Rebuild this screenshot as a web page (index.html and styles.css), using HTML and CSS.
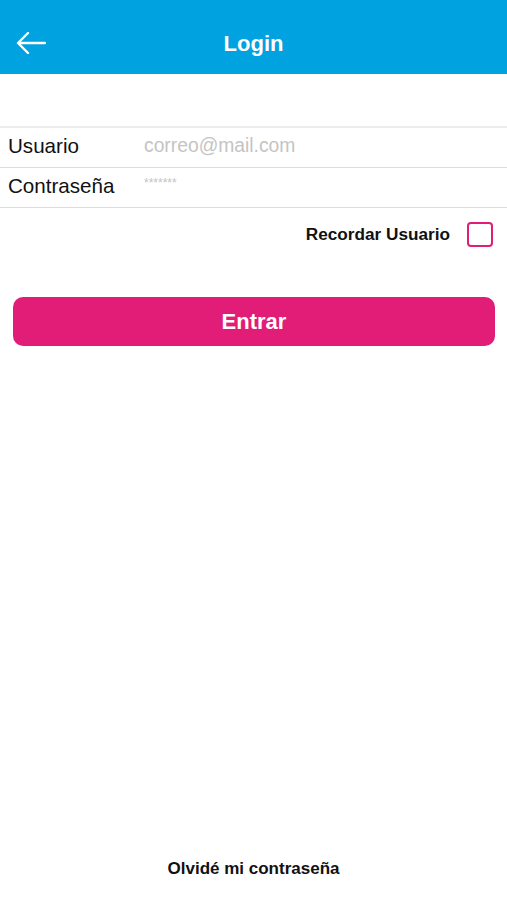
FILE: index.html
```html
<!DOCTYPE html>
<html lang="es">
<head>
    <meta charset="UTF-8">
    <meta name="viewport" content="width=device-width, initial-scale=1.0">
    <title>Login</title>
    <link rel="stylesheet" href="styles.css">
</head>
<body>
    <div class="screen">
        <header class="topbar">
            <span class="back">
                <svg width="30" height="22" viewBox="0 0 30 22">
                    <path d="M29 11H2M12 1L2 11l10 10" fill="none" stroke="#fff" stroke-width="2.4" stroke-linecap="round" stroke-linejoin="round"/>
                </svg>
            </span>
            <h1 class="title">Login</h1>
        </header>

        <form class="login-form">
            <div class="fields">
                <div class="field">
                    <label for="usuario">Usuario</label>
                    <input type="text" id="usuario" placeholder="correo@mail.com">
                </div>
                <div class="field">
                    <label for="clave">Contraseña</label>
                    <input type="text" id="clave" class="pass" placeholder="*******">
                </div>
            </div>

            <div class="remember">
                <span>Recordar Usuario</span>
                <span class="check"></span>
            </div>

            <button type="button" class="btn-entrar">Entrar</button>
        </form>

        <a class="forgot">Olvidé mi contraseña</a>
    </div>
</body>
</html>
```

FILE: styles.css
```css
* {
    box-sizing: border-box;
}
body {
    margin: 0;
    font-family: "Liberation Sans", Arial, sans-serif;
    background-color: #fff;
    color: #111;
}
.screen {
    height: 900px;
    display: flex;
    flex-direction: column;
}
.topbar {
    height: 74px;
    background-color: #00a2e0;
    display: flex;
    align-items: center;
    justify-content: center;
    position: relative;
    padding-top: 14px;
}
.back {
    position: absolute;
    left: 16px;
    top: 32px;
    display: flex;
}
.title {
    margin: 0;
    color: #fff;
    font-size: 22px;
    font-weight: bold;
}
.login-form {
    padding-top: 52px;
}
.fields {
    border-top: 2px solid #ececec;
}
.field {
    height: 40px;
    display: flex;
    align-items: center;
    border-bottom: 1px solid #dcdcdc;
    padding-left: 8px;
    padding-bottom: 3px;
}
.field label {
    width: 136px;
    font-size: 20.6px;
    color: #111;
}
.field input {
    flex: 1;
    border: none;
    outline: none;
    font-family: inherit;
    font-size: 19.3px;
    padding: 0;
    color: #111;
}
.field input::placeholder {
    color: #c4c4c4;
}
.field .pass {
    font-size: 12px;
    align-self: flex-start;
    margin-top: 8px;
}
.remember {
    display: flex;
    justify-content: flex-end;
    align-items: center;
    gap: 17px;
    padding: 14px 14px 0 0;
    font-size: 17.2px;
    font-weight: bold;
}
.check {
    width: 26px;
    height: 25px;
    border: 2px solid #e21d77;
    border-radius: 4px;
}
.btn-entrar {
    display: block;
    width: 482px;
    height: 49px;
    margin: 50px 0 0 13px;
    background-color: #e21d77;
    color: #fff;
    border: none;
    border-radius: 10px;
    font-family: inherit;
    font-size: 22px;
    font-weight: bold;
    cursor: pointer;
}
.forgot {
    margin-top: auto;
    margin-bottom: 21px;
    text-align: center;
    font-size: 17px;
    font-weight: bold;
    color: #111;
}
```
